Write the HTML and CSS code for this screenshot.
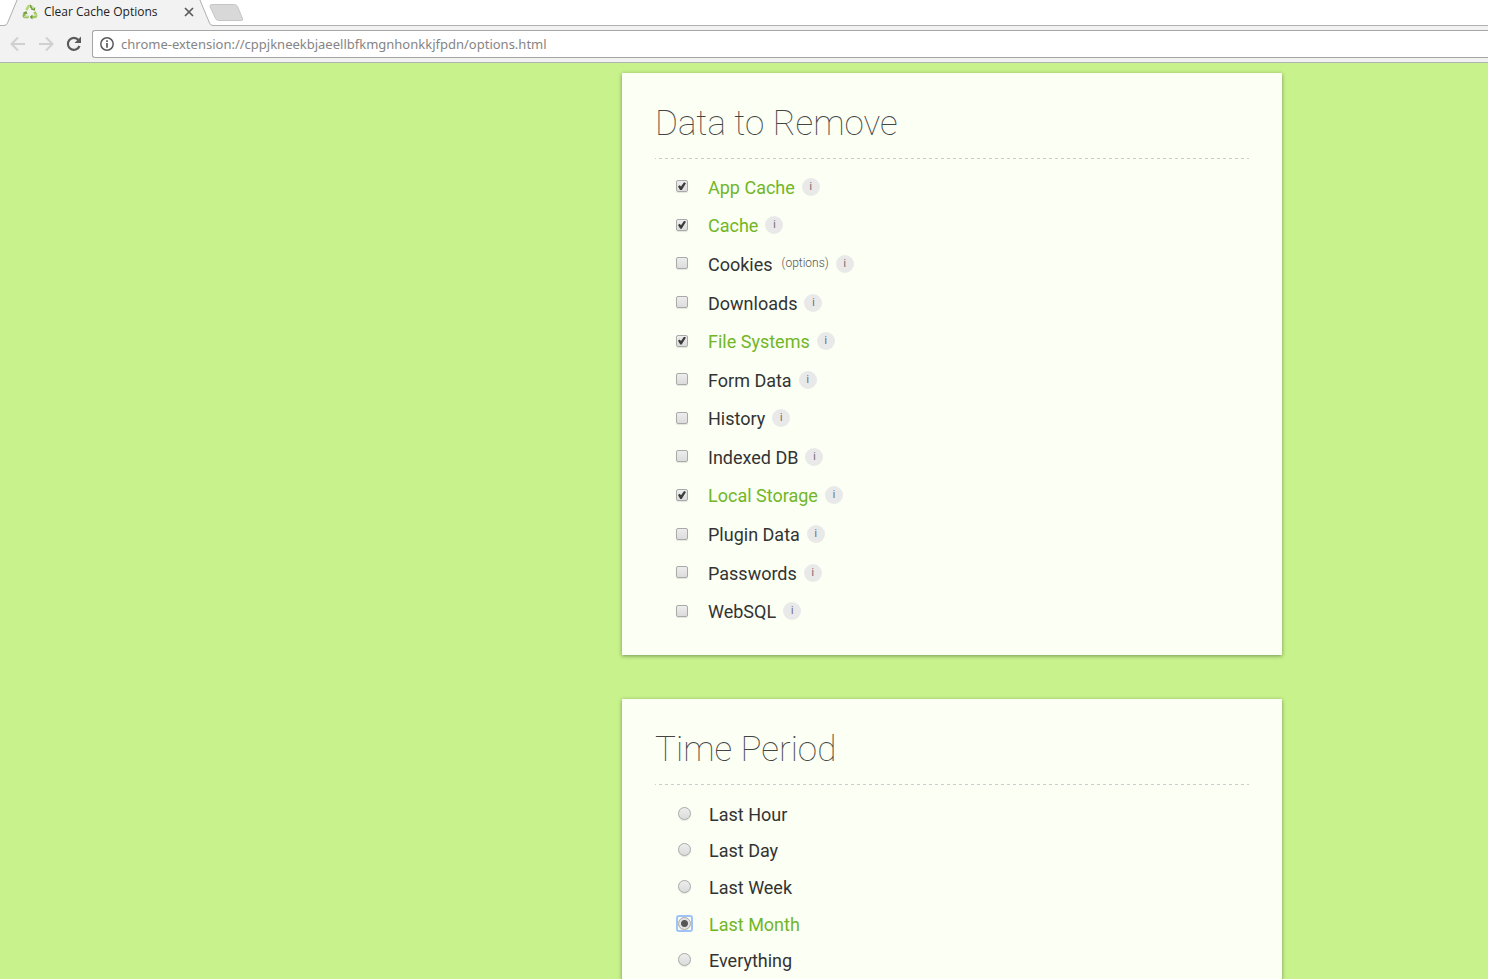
FILE: index.html
```html
<!DOCTYPE html>
<html lang="en">
<head>
<meta charset="utf-8">
<title>Clear Cache Options</title>
<link rel="stylesheet" href="styles.css">
</head>
<body>
<header class="browser">
  <div class="tabstrip">
    <div class="tab">
      <svg class="tab-shape" width="214" height="26" viewBox="0 0 214 26" aria-hidden="true">
        <path d="M0 26V25.5H4Q6.500 25.500 7.500 23L17.500 -1H199.500L209.500 23Q210.500 25.500 213 25.500H214V26Z" fill="#f2f2f2"/>
        <path d="M0 25.500H4Q6.500 25.500 7.500 23L17.500 -1M199.500 -1L209.500 23Q210.500 25.500 213 25.500H214" fill="none" stroke="#b0b0b0"/>
      </svg>
      <svg class="favicon" width="16" height="16" viewBox="0 0 16 16" aria-hidden="true">
        <g fill="none" stroke-width="2.600">
          <path d="M4.300 6.200L6.300 2.600Q7 1.700 8 2.100" stroke="#b5d66c"/>
          <path d="M8 2.100Q9 2 9.800 3.400L11 5.400" stroke="#6f9f42"/>
          <path d="M12.500 7.800L14 10.500Q14.500 12.800 12.500 13H9.600" stroke="#a3c95c"/>
          <path d="M6.600 13H3Q1.400 12.600 2 10.800L3.200 8.700" stroke="#8fb654"/>
        </g>
        <path d="M9 5.500L12.800 6.700L13.300 3.200ZM10.400 10.400V15.600L7.700 13ZM0.800 8.900L4.300 7L5.500 10.200Z" fill="#6a9a3a"/>
        <path d="M9.500 1.500L11.500 5M2 12.800H6M14.200 9.800L13.800 12" stroke="#d7e8ae" fill="none"/>
      </svg>
      <span class="tab-title">Clear Cache Options</span>
      <button class="tab-close" type="button" aria-label="Close tab">
        <svg width="10" height="10" viewBox="0 0 10 10"><path d="M1 1L9 9M9 1L1 9" stroke="#5a5a5a" stroke-width="1.700"/></svg>
      </button>
    </div>
    <button class="new-tab" type="button" aria-label="New tab">
      <svg width="36" height="18" viewBox="0 0 36 18"><path d="M3 .5H25.500Q27.500 .5 28.500 2.500L33.500 14.500Q34.500 16.500 32.500 16.500H9.500Q7.500 16.500 6.500 14.500L1 2.500Q.5 .5 3 .5Z" fill="#d8d8d8" stroke="#c6c6c6"/></svg>
    </button>
  </div>
  <div class="toolbar">
    <button class="nav" type="button" aria-label="Back" disabled>
      <svg width="16" height="16" viewBox="0 0 16 16"><path d="M15 8H2M8 1.500L1.500 8L8 14.500" fill="none" stroke="#d0d0d0" stroke-width="2"/></svg>
    </button>
    <button class="nav" type="button" aria-label="Forward" disabled>
      <svg width="16" height="16" viewBox="0 0 16 16"><path d="M1 8H14M8 1.500L14.500 8L8 14.500" fill="none" stroke="#d0d0d0" stroke-width="2"/></svg>
    </button>
    <button class="nav" type="button" aria-label="Reload">
      <svg width="16" height="16" viewBox="0 0 16 16"><path d="M13.500 10A6 6 0 1 1 12.500 4" fill="none" stroke="#5a5a5a" stroke-width="2.200"/><path d="M15 .5V7H8.500Z" fill="#5a5a5a"/></svg>
    </button>
    <div class="omnibox">
      <svg width="14" height="14" viewBox="0 0 14 14" aria-hidden="true"><circle cx="7" cy="7" r="6.200" fill="none" stroke="#5a5a5a" stroke-width="1.500"/><path d="M7 3.200V4.900M7 6V10.800" stroke="#5a5a5a" stroke-width="1.700"/></svg>
      <input class="url" type="text" aria-label="Address" value="chrome-extension://cppjkneekbjaeellbfkmgnhonkkjfpdn/options.html">
    </div>
  </div>
</header>
<main class="page">
  <section class="card">
    <h1 class="card-title">Data to Remove</h1>
    <ul class="options data-options">
      <li class="option"><input class="box" type="checkbox" id="appcache" checked><label for="appcache">App Cache</label><button class="info" type="button">i</button></li>
      <li class="option"><input class="box" type="checkbox" id="cache" checked><label for="cache">Cache</label><button class="info" type="button">i</button></li>
      <li class="option"><input class="box" type="checkbox" id="cookies"><label for="cookies">Cookies</label><a class="more" href="#cookies">(options)</a><button class="info" type="button">i</button></li>
      <li class="option"><input class="box" type="checkbox" id="downloads"><label for="downloads">Downloads</label><button class="info" type="button">i</button></li>
      <li class="option"><input class="box" type="checkbox" id="filesystems" checked><label for="filesystems">File Systems</label><button class="info" type="button">i</button></li>
      <li class="option"><input class="box" type="checkbox" id="formdata"><label for="formdata">Form Data</label><button class="info" type="button">i</button></li>
      <li class="option"><input class="box" type="checkbox" id="history"><label for="history">History</label><button class="info" type="button">i</button></li>
      <li class="option"><input class="box" type="checkbox" id="indexeddb"><label for="indexeddb">Indexed DB</label><button class="info" type="button">i</button></li>
      <li class="option"><input class="box" type="checkbox" id="localstorage" checked><label for="localstorage">Local Storage</label><button class="info" type="button">i</button></li>
      <li class="option"><input class="box" type="checkbox" id="plugindata"><label for="plugindata">Plugin Data</label><button class="info" type="button">i</button></li>
      <li class="option"><input class="box" type="checkbox" id="passwords"><label for="passwords">Passwords</label><button class="info" type="button">i</button></li>
      <li class="option"><input class="box" type="checkbox" id="websql"><label for="websql">WebSQL</label><button class="info" type="button">i</button></li>
    </ul>
  </section>
  <section class="card">
    <h1 class="card-title">Time Period</h1>
    <ul class="options time-options">
      <li class="option"><input class="dot" type="radio" name="period" id="hour"><label for="hour">Last Hour</label></li>
      <li class="option"><input class="dot" type="radio" name="period" id="day"><label for="day">Last Day</label></li>
      <li class="option"><input class="dot" type="radio" name="period" id="week"><label for="week">Last Week</label></li>
      <li class="option"><input class="dot" type="radio" name="period" id="month" checked><label for="month">Last Month</label></li>
      <li class="option"><input class="dot" type="radio" name="period" id="everything"><label for="everything">Everything</label></li>
    </ul>
  </section>
</main>
</body>
</html>
```
FILE: styles.css
```css
* { box-sizing: border-box; }
body {
  margin: 0;
  height: 100vh;
  overflow: hidden;
  background: #c8f28b;
  font-family: Roboto, sans-serif;
  color: #333;
}
button { border: 0; padding: 0; background: none; font: inherit; }
svg { display: block; }

.browser { font-family: "Noto Sans", sans-serif; }
.tabstrip {
  display: flex;
  height: 26px;
  background: #fff;
  border-bottom: 1px solid #b0b0b0;
}
.tab {
  position: relative;
  display: flex;
  align-items: center;
  flex: none;
  width: 209px;
  height: 24px;
  padding-left: 22px;
}
.tab-shape { position: absolute; left: 0; top: 0; }
.favicon, .tab-title, .tab-close { position: relative; }
.tab-title { flex: 1; margin-left: 6px; padding-bottom: 1px; font: 12px "Open Sans", sans-serif; color: #222; }
.tab-close { margin-right: 15px; }
.new-tab { align-self: flex-start; padding-top: 4px; }
.toolbar {
  display: flex;
  align-items: center;
  height: 37px;
  padding: 0 0 1px 10px;
  background: #f2f2f2;
  border-bottom: 1px solid #b3b3b3;
}
.nav { width: 28px; display: flex; }
.nav svg { flex: none; }
.omnibox {
  display: flex;
  align-items: center;
  flex: 1;
  gap: 7px;
  height: 28px;
  margin-left: -2px;
  padding-left: 7px;
  background: #fff;
  border: 1px solid #a6a6a6;
  border-right: 0;
  border-radius: 3px 0 0 3px;
}
.url {
  flex: 1;
  border: 0;
  padding: 0;
  outline: 0;
  background: none;
  font: 13px "Noto Sans", sans-serif;
  color: #858585;
}

.page {
  display: flex;
  flex-direction: column;
  align-items: center;
  gap: 44px;
  padding: 10px 0 44px 416px;
}
.card {
  width: 100%;
  max-width: 660px;
  padding: 0 33px 24px;
  background: #fbfff4;
  box-shadow: 0 1px 4px rgba(0, 0, 0, .4);
}
.card-title {
  margin: 0;
  height: 86px;
  padding-top: 29px;
  font-size: 35px;
  line-height: 44px;
  font-weight: 100;
  color: #444;
  background: repeating-linear-gradient(90deg, #ccc 0 3px, transparent 3px 6px) -2px 100% / 600px 1px no-repeat;
}
.options {
  display: grid;
  grid-auto-rows: 1fr;
  margin: 0;
  padding: 0;
  list-style: none;
}
.data-options { min-height: 463px; margin-top: 9px; }
.time-options { min-height: 183px; margin-top: 11px; }
.option {
  display: flex;
  align-items: center;
  padding-left: 21px;
  font-size: 18px;
  line-height: 24px;
}
.option label { padding-top: 1px; }
.option input:checked + label { color: #72b626; }
.box, .dot {
  appearance: none;
  position: relative;
  flex: none;
  margin: 0 20px 2px 0;
  width: 12px;
  height: 12px;
  border: 1px solid #a9a9a9;
  border-radius: 2px;
  background: linear-gradient(#ededed, #dcdcdc);
  box-shadow: 0 1px 1px rgba(0, 0, 0, .1);
}
.box:checked::after {
  content: "";
  position: absolute;
  inset: 1px;
  background: #3c3c3c;
  clip-path: polygon(0 52%, 20% 36%, 38% 54%, 76% 0, 100% 12%, 46% 100%, 28% 100%);
}
.dot {
  width: 13px;
  height: 13px;
  margin: 0 18px 2px 2px;
  border-radius: 50%;
}
.dot:checked { background: radial-gradient(circle, #555 0 3px, #e2e2e2 4px); }
.dot:checked::before {
  content: "";
  position: absolute;
  inset: -3px;
  border: 2px solid #9fc3f8;
  border-radius: 3px;
}
.more { margin: 0 0 2px 9px; font-size: 12px; font-weight: 300; color: #555; text-decoration: none; }
.info {
  width: 18px;
  height: 18px;
  margin: 0 0 1px 7px;
  border-radius: 50%;
  background: #e9e9e9;
  font-size: 10px;
  line-height: 16px;
  color: #666;
}
```
